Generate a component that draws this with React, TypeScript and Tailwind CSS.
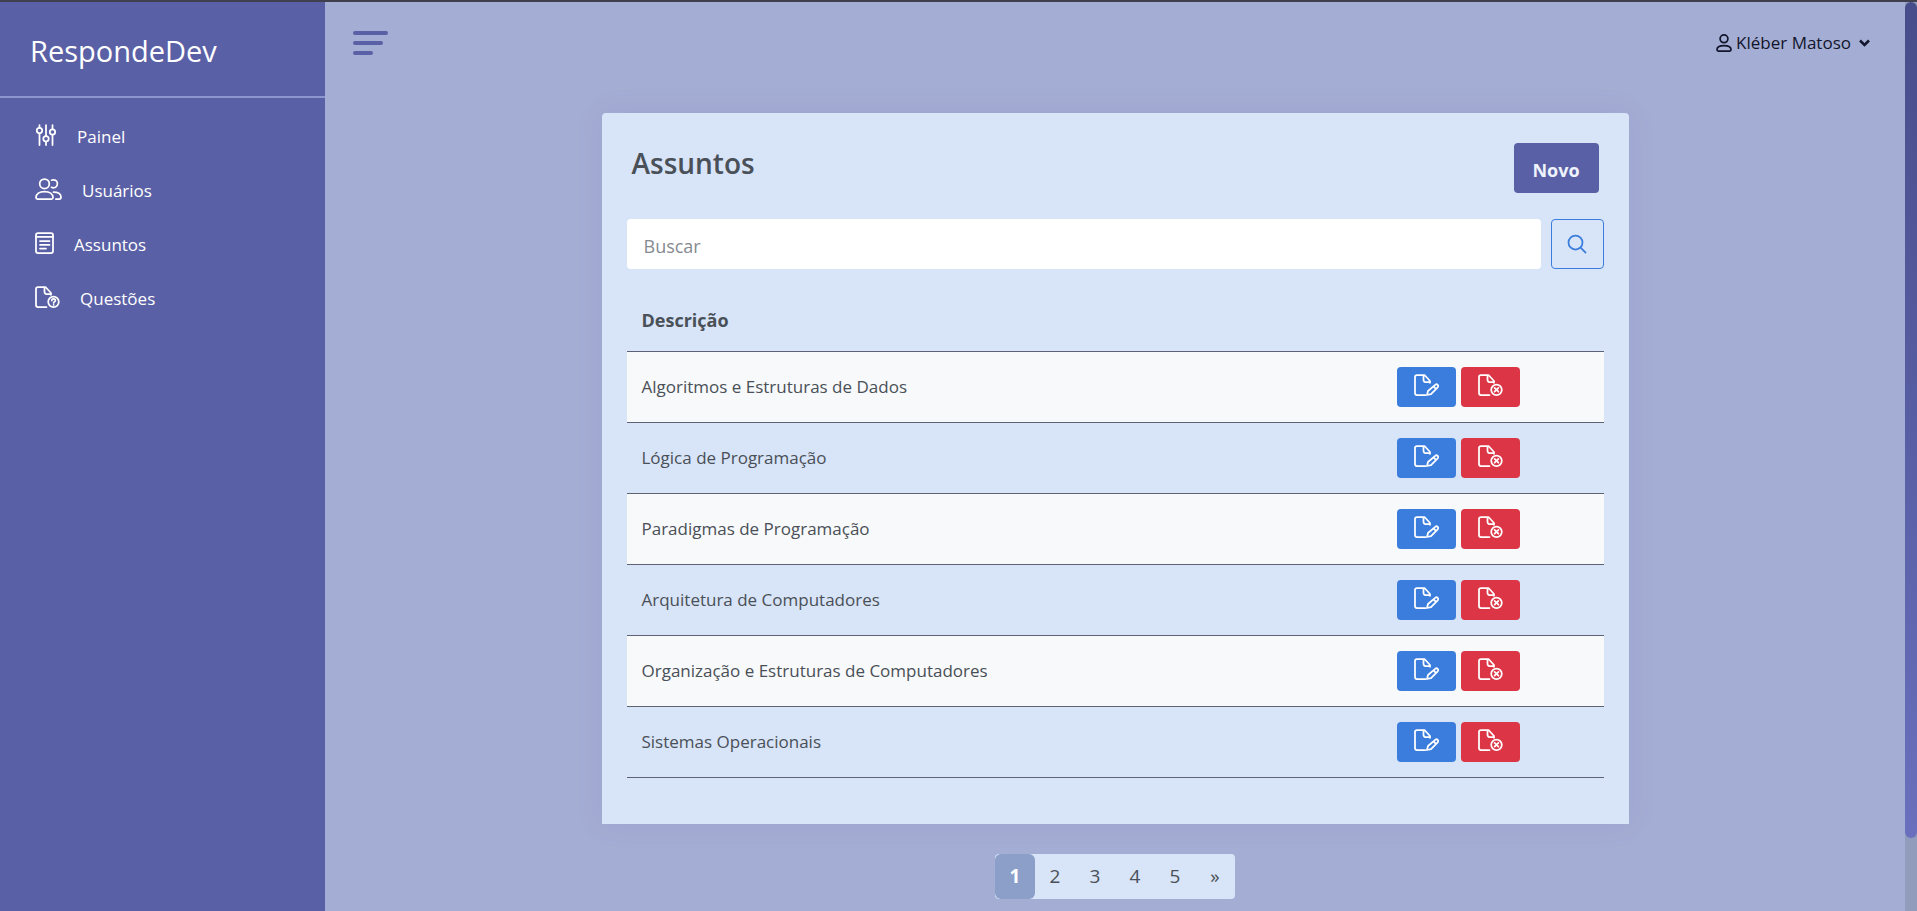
import type { ReactNode } from "react";

type IconProps = { className?: string; children: ReactNode; box: string };

function Icon({ className = "", children, box }: IconProps) {
  return (
    <svg
      aria-hidden="true"
      viewBox={box}
      className={"shrink-0 " + className}
      fill="none"
      stroke="currentColor"
      strokeWidth="1.75"
      strokeLinecap="round"
      strokeLinejoin="round"
    >
      {children}
    </svg>
  );
}

const SlidersIcon = () => (
  <Icon box="0 0 22 22" className="h-[22px] w-[22px]">
    <path d="M4.5 1v2.5M4.5 9.5V21M11 1v11M11 18v3M17.5 1v4M17.5 11v10" />
    <circle cx="4.5" cy="6.6" r="2.7" />
    <circle cx="11" cy="14.8" r="2.7" />
    <circle cx="17.5" cy="8" r="2.7" />
  </Icon>
);

const UsersIcon = () => (
  <Icon box="0 0 27 22" className="h-[22px] w-[27px]">
    <circle cx="9.5" cy="5.8" r="4.8" />
    <path d="M1 19.5c0-3.6 3.4-6 8.5-6s8.500 2.400 8.500 6c0 1-.5 1.500-1.500 1.500h-14C1.500 21 1 20.500 1 19.500z" />
    <path d="M16.500 2.200c.6-.3 1.200-.4 1.900-.4a4 4 0 0 1 0 8c-.7 0-1.300-.1-1.900-.5" />
    <path d="M18.500 14c4.200 0 7.500 1.800 7.500 5 0 1.300-.5 2-1.700 2h-3.500" />
  </Icon>
);

const ListIcon = () => (
  <Icon box="0 0 19 22" className="h-[22px] w-[19px]">
    <rect x="1" y="1" width="17" height="20" rx="2" />
    <path d="M1 4.800h17M5 9h9.500M5 12.800h9.500M5 16.600h6" />
  </Icon>
);

const FileOutline = () => (
  <path d="M11.500 21H3a2 2 0 0 1-2-2V3a2 2 0 0 1 2-2h7.500l5.500 6v1.800M9.500 1v4.800c0 1.500.7 2.200 2 2.200H16" />
);

const FileQuestionIcon = () => (
  <Icon box="0 0 25 22" className="h-[22px] w-[25px]">
    <FileOutline />
    <circle cx="18.500" cy="15.800" r="5.300" />
    <path d="M16.800 14.600c0-2.300 3.600-2.300 3.600-.2 0 1.300-1.800 1.300-1.800 2.500M18.600 18.800v.1" />
  </Icon>
);

const FileEditIcon = () => (
  <Icon box="0 0 25 22" className="h-[22px] w-[25px]">
    <FileOutline />
    <path d="M13 21l1-4 7.200-6.200c1.800-1.500 4 .6 2.500 2.500l-6.700 6.900L13 21zM19.600 12.400l2.300 2.500" />
  </Icon>
);

const FileRemoveIcon = () => (
  <Icon box="0 0 25 22" className="h-[22px] w-[25px]">
    <FileOutline />
    <circle cx="18.500" cy="15.800" r="5.300" />
    <path d="M16.600 13.900l3.800 3.800M20.400 13.900l-3.800 3.800" />
  </Icon>
);

const menu = [
  { label: "Painel", icon: <SlidersIcon /> },
  { label: "Usuários", icon: <UsersIcon /> },
  { label: "Assuntos", icon: <ListIcon /> },
  { label: "Questões", icon: <FileQuestionIcon /> },
];

const subjects = [
  "Algoritmos e Estruturas de Dados",
  "Lógica de Programação",
  "Paradigmas de Programação",
  "Arquitetura de Computadores",
  "Organização e Estruturas de Computadores",
  "Sistemas Operacionais",
];

function Sidebar() {
  return (
    <aside className="w-[325px] shrink-0 bg-[#5a60a5] text-white">
      <div className="flex h-24 items-center border-b-2 border-[#8c97cf] pl-[30px] pt-1">
        <a href="#" className="text-[29px] leading-10">RespondeDev</a>
      </div>
      <nav className="pt-[10px]">
        <ul>
          {menu.map((item) => (
            <li key={item.label}>
              <a href="#" className="flex h-[54px] items-center gap-5 pl-[35px] text-[17px]">
                {item.icon}
                <span className="pt-1">{item.label}</span>
              </a>
            </li>
          ))}
        </ul>
      </nav>
    </aside>
  );
}

function TopBar() {
  return (
    <header className="flex h-[81px] items-center justify-between pl-7 pr-8">
      <button type="button" aria-label="Menu" className="flex flex-col gap-[6px] text-[#5a60a5]">
        <span className="h-1 w-[35px] rounded-sm bg-current" />
        <span className="h-1 w-[30px] rounded-sm bg-current" />
        <span className="h-1 w-5 rounded-sm bg-current" />
      </button>
      <button type="button" className="flex items-center gap-1 text-[17px] text-[#12152b]">
        <Icon box="0 0 16 18" className="h-[18px] w-4">
          <circle cx="8" cy="4.800" r="3.900" />
          <path d="M1 15.500c0-2.600 3-4 7-4s7 1.400 7 4c0 1-.4 1.500-1.400 1.500H2.400C1.400 17 1 16.500 1 15.500z" />
        </Icon>
        <span>Kléber Matoso</span>
        <Icon box="0 0 18 10" className="h-[10px] w-[18px]">
          <path d="M5 2.500l4.500 4.500L14 2.500" strokeWidth="2.500" strokeLinecap="butt" strokeLinejoin="miter" />
        </Icon>
      </button>
    </header>
  );
}

function SubjectsCard() {
  return (
    <section className="w-[65%] rounded-t bg-[#d8e4f7] px-[25px] pb-[46px] pt-[30px] text-[#495057] shadow-[0_0_28px_rgba(90,96,165,0.1)]">
      <div className="flex items-start justify-between px-[5px]">
        <h1 className="text-[28px] font-semibold leading-10">Assuntos</h1>
        <button type="button" className="h-[50px] w-[85px] rounded bg-[#5a60a5] pt-1 text-[18px] font-bold text-[#eef3fc]">
          Novo
        </button>
      </div>
      <form className="mt-[26px] flex gap-[10px]" onSubmit={(e) => e.preventDefault()}>
        <input
          type="search"
          aria-label="Buscar"
          placeholder="Buscar"
          className="h-[50px] min-w-0 flex-1 rounded bg-white px-[17px] pt-1 text-[18px] outline-none placeholder:text-[#868b91]"
        />
        <button
          type="submit"
          aria-label="Pesquisar"
          className="flex h-[50px] w-[53px] items-center justify-center rounded border border-[#3b7ddd] text-[#3b7ddd]"
        >
          <Icon box="0 0 20 20" className="h-5 w-5">
            <circle cx="8.500" cy="8.500" r="7" />
            <path d="M13.600 13.600l5 5" />
          </Icon>
        </button>
      </form>
      <table className="mt-[21px] w-full border-collapse text-left">
        <thead>
          <tr className="h-[61px] border-b border-[#5d6375]">
            <th scope="col" className="px-[15px] text-[18px] font-bold">Descrição</th>
            <th scope="col" className="w-[222px]" aria-label="Ações" />
          </tr>
        </thead>
        <tbody>
          {subjects.map((subject) => (
            <tr key={subject} className="h-[71px] border-b border-[#5d6375] odd:bg-[#f8f9fb]">
              <td className="px-[15px] text-[17px]">{subject}</td>
              <td className="px-[15px]">
                <div className="flex gap-[5px]">
                  <button type="button" aria-label="Editar" className="flex h-10 w-[59px] items-center justify-center rounded bg-[#3b7ddd] pb-1 text-white">
                    <FileEditIcon />
                  </button>
                  <button type="button" aria-label="Excluir" className="flex h-10 w-[59px] items-center justify-center rounded bg-[#dc3545] pb-1 text-white">
                    <FileRemoveIcon />
                  </button>
                </div>
              </td>
            </tr>
          ))}
        </tbody>
      </table>
    </section>
  );
}

function Pagination() {
  return (
    <nav aria-label="Paginação" className="mt-[30px] flex h-[45px] rounded bg-[#d8e4f7] text-[19px] text-[#495057]">
      <a href="#" aria-current="page" className="flex w-10 items-center justify-center rounded-md bg-[#8c9fc9] font-bold text-white">1</a>
      {["2", "3", "4", "5", "»"].map((page) => (
        <a key={page} href="#" className="flex w-10 items-center justify-center">{page}</a>
      ))}
    </nav>
  );
}

export default function App() {
  return (
    <div className="flex min-h-screen border-t-2 border-[#3f3f4d] bg-[#a4add4] font-['Open_Sans','Noto_Sans',sans-serif]">
      <Sidebar />
      <div className="flex min-w-0 flex-1 flex-col">
        <TopBar />
        <main className="flex flex-col items-center pt-[30px]">
          <SubjectsCard />
          <Pagination />
        </main>
      </div>
      <div className="flex w-3 shrink-0 flex-col bg-[#919bbc]">
        <div className="basis-[92%] rounded-md bg-linear-to-b from-[#474c8a] to-[#6a70bd]" />
      </div>
    </div>
  );
}
